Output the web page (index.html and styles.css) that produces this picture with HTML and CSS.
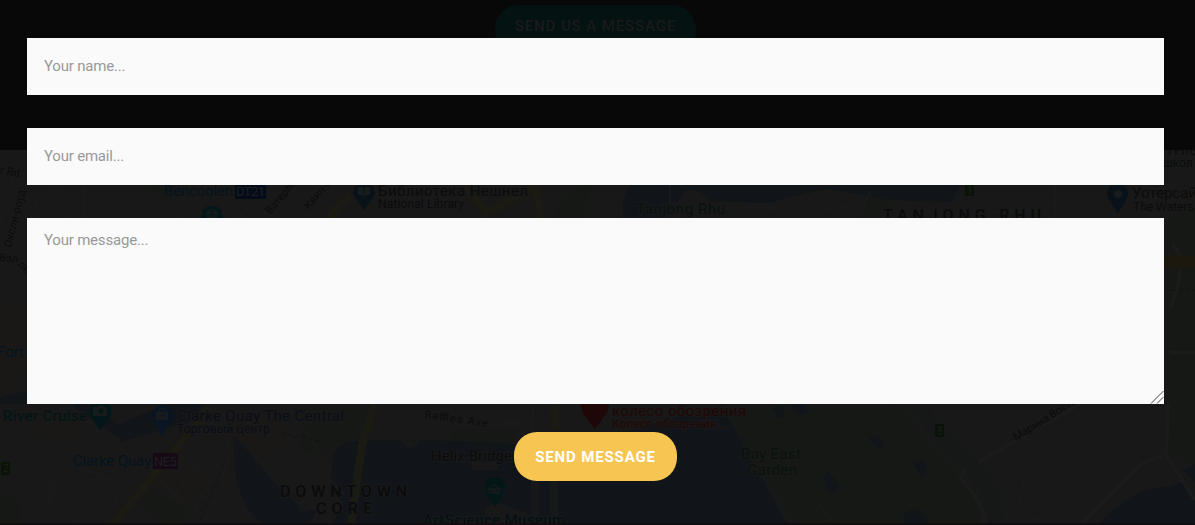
FILE: index.html
```
<!DOCTYPE html>
<html lang="en">
<head>
<meta charset="utf-8">
<title>Send us a message</title>
<link rel="stylesheet" href="styles.css">
</head>
<body>
<div class="page">
  <div class="backdrop">
    <div class="cta-row"><span class="cta">SEND US A MESSAGE</span></div>
    <svg class="map" viewBox="0 150 1195 375" aria-hidden="true">
      <g class="park">
        <path d="M145 185L166 200L178 185ZM856 218L870 198L882 185H900L877 218ZM1170 218L1195 210V430L1170 410Z"/>
        <path d="M553 218L566 198L582 185H592L578 218ZM0 498L20 499V525H0ZM139 500L152 489L184 510V525H168Z"/>
        <path d="M305 404H370L355 440L333 443L318 457L300 446ZM452 428L513 430V443L452 441ZM728 404H895L975 498L980 525H800L728 425Z"/>
        <path d="M1169 404H1195V467L1170 450Z"/>
      </g>
      <g class="beige">
        <path d="M0 310L27 302V365L0 395ZM40 415L85 418L70 445L40 435ZM170 455L210 475L190 504L150 480ZM240 410L290 425L270 460L220 440Z"/>
      </g>
      <g class="water">
        <path d="M624 218Q620 200 630 185H840L800 194L770 203L710 201Q700 188 686 190L678 202L665 218Z"/>
        <path d="M800 185H960L952 202L935 201L890 200L860 194Z"/>
        <path d="M333 457Q337 443 352 441L440 441L540 445L577 445L728 404H720L788 525H330L344 505L331 486Z"/>
        <path d="M0 398Q30 385 80 398L118 425L143 414L170 404H205L190 422L123 441L98 423L70 404H0Z"/>
        <path d="M233 434L249 453L272 480L300 507V525H263Q240 508 235 470ZM300 512L318 509L308 525H300ZM1099 525Q1130 487 1168 487L1184 481L1195 500V525ZM1183 470L1195 464V482Z"/>
        <path d="M773 408L783 406L784 417L778 418ZM790 404H803L808 413L798 416ZM868 436Q881 433 884 447L878 449ZM824 478L827 470L835 480L839 488L830 495ZM913 462L923 460L927 470L922 479ZM904 514L915 508L926 516L928 525H904Z"/>
      </g>
      <path class="land" d="M400 441H420L414 447H407ZM472 462H498V470H472ZM484 515Q485 503 500 503L530 515V525H490Z"/>
      <g class="road">
        <path d="M0 225Q10 180 25 150M35 218Q35 185 58 188T65 218M84 185V218M90 202Q110 190 120 203L150 215M180 218L205 185M212 185L245 218M233 218L290 185M300 205L330 185M315 195L345 218"/>
        <path d="M0 455L30 435L75 404M60 404L100 430L145 470L210 520M70 435L50 455L110 480H55L50 510L80 525M52 480L45 525M100 440L140 465L115 500L130 525M150 465L190 510M165 470L210 500M180 455L220 480M170 500L200 465L240 430L265 404M187 525L210 480L230 440M203 525L220 490L230 450M240 415L275 450L300 430M275 410L300 440M287 404L315 445L325 475L345 495"/>
        <path d="M415 404L425 418L460 424H540L560 404M533 404V525M497 404Q495 425 520 420M1115 404Q1125 440 1127 458L1105 487M1069 412L1090 450M1027 438L1030 449L1016 465L1024 480L1018 510L1035 520L1050 516M670 185V203L700 208H775L780 218M860 218L870 190M820 195L825 210L860 204M1055 185V218M978 213L1030 210L1105 196M815 500L835 525"/>
      </g>
      <path class="road wide" d="M960 479L965 470L1055 418L1080 404M962 480Q985 505 985 525M1080 525L1140 465L1163 455M1168 404L1166 455L1195 500M1170 353H1195M1172 245Q1190 255 1170 310"/>
      <path class="road bridge" d="M535 445V525M554 481V525"/>
      <path class="road dark" d="M918 404L935 430L975 470Q995 490 995 525"/>
      <path class="trail" d="M370 441L440 441L530 447M240 425L320 441M200 520L225 460M1165 290H1195M711 201H770L830 188M898 199L935 203L955 197M120 442L190 412M272 475L310 510"/>
      <path class="highway" d="M112 525L210 408M328 218L350 195M465 185L486 213L535 187L542 218M375 404L362 445L351 525M555 404V430"/>
      <path class="amber" d="M1164 262H1195"/>

      <g class="pins">
        <path class="teal" d="M100 430L92 418A11 11 0 1 1 109 418ZM495 507L487 494A10.5 10.5 0 1 1 503 494Z"/>
        <circle class="teal" cx="212" cy="216" r="10.5"/>
        <path class="blue" d="M162 435L154 422A10.5 10.5 0 1 1 171 422Z"/>
        <path class="navy" d="M364 210L356 199A10.5 10.5 0 1 1 372 199ZM1118 213L1109 200A10.5 10.5 0 1 1 1126 200Z"/>
        <path class="red" d="M595 429L584 415Q580 408 580 395H609Q610 410 605 415Z"/>
        <circle class="hole" cx="1118" cy="194" r="4"/>
        <path class="glyph" d="M93 407H97L99 405H103L104 407H107V416H93ZM156 412H168V420H156ZM358 187H363L364 189L365 187H370V195H365L364 197L363 195H358Z"/>
        <path class="outline" d="M159 412Q159 408 162 408T165 412M489 489L494 485L500 489ZM490 489V493H499V489M493 493V490L494.500 491.500L496 490V493M207 213L212 209L217 213ZM208 213V218H216V213M210 218V215M214 218V215"/>
        <path class="iconline" d="M364 188V195M159 415Q162 418 165 415"/>
        <circle class="teal" cx="101" cy="411" r="2.500"/>
      </g>

      <g class="badges">
        <rect class="station-blue" x="235" y="184" width="31" height="15"/>
        <rect class="station-purple" x="153" y="453" width="25" height="16"/>
        <path class="route" d="M1 462H10V475H1ZM935 424H944V437H935ZM965 183H974V196H965Z"/>
        <text class="badge-text" x="236" y="196" textLength="29">DT21</text>
        <text class="badge-text" x="154" y="466" textLength="23">NE5</text>
        <text class="route-text" x="3" y="472">2</text><text class="route-text" x="937" y="435">5</text><text class="route-text" x="967" y="194">1</text>
      </g>

      <g class="labels">
        <text class="cyan" x="164" y="196" textLength="69">Bencoolen</text>
        <text class="cyan" x="73" y="466" textLength="78">Clarke Quay</text>
        <text class="cyan" x="-3" y="357">Fort C</text>
        <text class="aqua bold" x="3" y="421" textLength="84">River Cruise</text>
        <text class="indigo" x="177" y="421" textLength="167">Clarke Quay The Central</text>
        <text class="indigo small" x="177" y="433" textLength="93">Торговый центр</text>
        <text x="378" y="196" textLength="150">Библиотека Нешнел</text>
        <text class="small" x="378" y="208" textLength="86">National Library</text>
        <text class="green" x="636" y="214" textLength="89">Tanjong Rhu</text>
        <text class="area" x="883" y="221" textLength="158">TANJONG RHU</text>
        <text x="1132" y="198">Уотерсай</text>
        <text class="small" x="1133" y="211">The Waters</text>
        <text x="1165" y="155">THIG</text>
        <text class="small" x="1163" y="167">школ</text>
        <text x="431" y="461" textLength="81">Helix Bridge</text>
        <text class="area" x="280" y="497" textLength="127">DOWNTOWN</text>
        <text class="area" x="316" y="514" textLength="56">CORE</text>
        <text class="aqua-dark bold" x="423" y="525" textLength="142">ArtScience Museum</text>
        <text class="crimson" x="612" y="416" textLength="134">колесо обозрения</text>
        <text class="crimson small" x="612" y="428" textLength="114">Колесо обозрения...</text>
        <text class="green" x="741" y="459" textLength="60">Bay East</text>
        <text class="green" x="747" y="475" textLength="50">Garden</text>
        <text class="street" transform="translate(424 418) rotate(8)" textLength="64">Raffles Ave</text>
        <text class="street" transform="translate(1016 441) rotate(-32)" textLength="72">Марина Восто</text>
        <text class="street" transform="translate(270 215) rotate(-50)">Ватерло</text>
        <text class="street" transform="translate(309 210) rotate(-50)">Квин-с</text>
        <text class="street" transform="translate(11 248) rotate(-76)">Оксли-роуд</text>
        <text class="street" transform="translate(-6 172) rotate(12)">er Rd</text>
        <text class="street" transform="translate(-1 261) rotate(5)">Вэл</text><text class="street" transform="translate(17 265) rotate(45)">ли</text>
      </g>
      <rect class="map-end" x="0" y="523" width="1195" height="2"/>
    </svg>
  </div>

  <form class="message-form">
    <input class="field" type="text" placeholder="Your name...">
    <input class="field" type="email" placeholder="Your email...">
    <div class="message-wrap">
      <textarea class="field message" placeholder="Your message..."></textarea>
      <svg class="grip" viewBox="0 0 14 14" aria-hidden="true"><path d="M1 13.500L13.500 1M7 13.500L13.500 7"/></svg>
    </div>
    <button class="send" type="button">SEND MESSAGE</button>
  </form>
</div>
</body>
</html>
```
FILE: styles.css
```
* { box-sizing: border-box; }
body { margin: 0; background: #080808; font-family: Roboto, "Liberation Sans", sans-serif; }
.page { position: relative; height: 525px; overflow: hidden; }
.backdrop { position: absolute; inset: 0; display: flex; flex-direction: column; }
.cta-row { height: 150px; flex: none; padding: 5px 4px 0 0; text-align: center; }
.cta { display: inline-block; width: 201px; height: 49px; line-height: 42px; border-radius: 24px; background: #041212; color: #1a1a1a; font-size: 15px; font-weight: 500; letter-spacing: .9px; }
.map { display: block; width: 100%; height: 375px; flex: none; background: #181818; }

.message-form { position: relative; display: flex; flex-direction: column; align-items: center; padding: 38px 31px 0 27px; }
.field { display: block; width: 100%; height: 57px; margin: 0 0 33px; padding: 0 17px 2px; border: 0; border-radius: 0; outline: 0; background: #fafafa; color: #333; font: 400 15px/20px Roboto, "Liberation Sans", sans-serif; letter-spacing: -.2px; }
.field::placeholder { color: #999; opacity: 1; }
.message-wrap { position: relative; width: 100%; margin-bottom: 28px; }
.message { height: 186px; margin: 0; padding-top: 12px; resize: none; }
.grip { position: absolute; right: 0; bottom: 0; width: 14px; height: 14px; fill: none; stroke: #444; stroke-width: 1; }
.send { width: 163px; height: 49px; padding: 1px 0 0; border: 0; border-radius: 23px; background: #f7c552; color: #fff; font: 700 15px/48px Roboto, "Liberation Sans", sans-serif; letter-spacing: .85px; }

.land { fill: #181818; }
.park { fill: #151815; }
.beige { fill: #191817; }
.water { fill: #11151a; }
.road { fill: none; stroke: #1a1a1a; stroke-width: 2; }
.wide { stroke: #1b1b1b; stroke-width: 4; }
.bridge { stroke: #171819; stroke-width: 8; }
.road.dark { stroke: #161717; stroke-width: 14; }
.trail { fill: none; stroke: #0f1511; stroke-width: 1; stroke-dasharray: 4 3; }
.highway { fill: none; stroke: #1b1a13; stroke-width: 8; }
.amber { stroke: #1c180e; stroke-width: 13; }
.teal { fill: #041718; }
.blue { fill: #091522; }
.navy { fill: #091218; }
.red { fill: #1e0706; }
.hole, .glyph { fill: #171b1c; }
.outline { fill: none; stroke: #171b1c; stroke-width: 1.3; }
.iconline { fill: none; stroke: #071819; stroke-width: 1; }
.station-blue { fill: #030c18; }
.station-purple { fill: #150915; }
.route { fill: #0b1308; }
.badge-text { fill: #1f1f22; font-size: 13px; }
.route-text { fill: #1a2018; font-size: 10px; }

.labels { fill: #0a0b0c; stroke: #191919; stroke-width: 2px; paint-order: stroke; stroke-linejoin: round; font-size: 15px; }
.small { font-size: 12px; }
.bold { font-weight: 500; }
.street { font-size: 11px; }
.area { font-size: 16px; font-weight: 500; }
.cyan { fill: #04131c; }
.aqua { fill: #041414; }
.aqua-dark { fill: #041012; }
.indigo { fill: #0a0d16; }
.green { fill: #07110b; }
.crimson { fill: #1f0706; }
.map-end { fill: #110d10; }
```
